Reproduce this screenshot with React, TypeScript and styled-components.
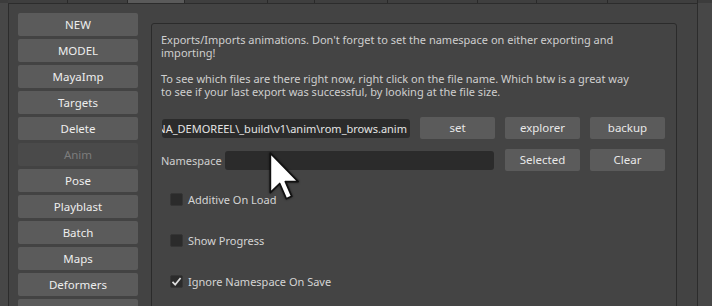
import React from "react";
import styled, { createGlobalStyle } from "styled-components";

const GlobalStyle = createGlobalStyle`
  html, body {
    margin: 0;
    padding: 0;
    background: #444444;
  }
  body {
    font-family: "Noto Sans", "Open Sans", sans-serif;
    color: #d8d8d8;
  }
`;

const tabs = [60, 60, 57, 83, 47, 73, 90, 59, 71, 90];
const sideItems = [
  "NEW",
  "MODEL",
  "MayaImp",
  "Targets",
  "Delete",
  "Anim",
  "Pose",
  "Playblast",
  "Batch",
  "Maps",
  "Deformers",
  "",
];

const App = () => {
  return (
    <Screen>
      <GlobalStyle />
      {/* tab strip, only the bottom edge is visible */}
      <TabStrip>
        {tabs.map((w, i) => (
          <Tab key={i} $width={w} $active={i === 2} />
        ))}
      </TabStrip>

      <Frame>
        {/* side menu */}
        <Sidebar>
          {sideItems.map((name, i) => (
            <SideButton key={i} $disabled={name === "Anim"}>
              {name}
            </SideButton>
          ))}
        </Sidebar>

        {/* anim panel */}
        <Panel>
          <Info>
            Exports/Imports animations. Don't forget to set the namespace on
            either exporting and importing!
            <br />
            <br />
            To see which files are there right now, right click on the file
            name. Which btw is a great way to see if your last export was
            successful, by looking at the file size.
          </Info>

          <Controls>
            <PathField>
              <span>NA_DEMOREEL\_build\v1\anim\rom_brows.anim</span>
            </PathField>
            <ToolButton>set</ToolButton>
            <ToolButton>explorer</ToolButton>
            <ToolButton>backup</ToolButton>

            <NamespaceRow>
              <Label>Namespace</Label>
              <TextInput />
            </NamespaceRow>
            <ToolButton>Selected</ToolButton>
            <ToolButton>Clear</ToolButton>
          </Controls>

          <Options>
            <CheckRow>
              <Box />
              <span>Additive On Load</span>
            </CheckRow>
            <CheckRow>
              <Box />
              <span>Show Progress</span>
            </CheckRow>
            <CheckRow>
              <Box>
                <svg width="11" height="11" viewBox="0 0 11 11">
                  <path
                    d="M1.5 5.8 L4.2 8.6 L9.6 2"
                    fill="none"
                    stroke="#dcdcdc"
                    strokeWidth="1.7"
                  />
                </svg>
              </Box>
              <span>Ignore Namespace On Save</span>
            </CheckRow>
          </Options>
        </Panel>
      </Frame>

      <Cursor width="31" height="48" viewBox="0 0 12.5 19.5">
        <path
          d="M0.5 0.5 L0.5 16.5 L4.3 12.8 L7 19 L9.2 18 L6.6 12 L11.8 12 Z"
          fill="#ffffff"
          stroke="#111"
          strokeWidth="0.7"
          strokeLinejoin="round"
        />
      </Cursor>
    </Screen>
  );
};

const Screen = styled.div`
  position: relative;
  width: 712px;
  height: 306px;
  overflow: hidden;
  background: #474747;
`;

const TabStrip = styled.div`
  display: flex;
  height: 3px;
  padding-left: 8px;
  background: #3c3c3c;
`;

const Tab = styled.div<{ $width: number; $active?: boolean }>`
  width: ${(p) => p.$width}px;
  height: 3px;
  background: ${(p) => (p.$active ? "#5a5a5a" : "#3f3f3f")};
  border-right: 1px solid #2a2a2a;
  box-sizing: border-box;
`;

const Frame = styled.div`
  display: flex;
  align-items: flex-start;
  width: 690px;
  height: 310px;
  margin-left: 8px;
  box-sizing: border-box;
  border: 1px solid #2c2c2c;
  border-bottom: none;
  background: #434343;
  padding: 9px 0 0 9px;
`;

const Sidebar = styled.div`
  display: flex;
  flex-direction: column;
  gap: 3px;
  width: 120px;
  flex-shrink: 0;
`;

const SideButton = styled.div<{ $disabled?: boolean }>`
  height: 23px;
  line-height: 23px;
  text-align: center;
  font-size: 11.5px;
  border-radius: 2px;
  background: ${(p) => (p.$disabled ? "#4a4a4a" : "#5b5b5b")};
  color: ${(p) => (p.$disabled ? "#7c7c7c" : "#eeeeee")};
`;

const Panel = styled.div`
  margin: 10px 0 0 13px;
  width: 526px;
  height: 300px;
  box-sizing: border-box;
  border: 1px solid #2b2b2b;
  border-radius: 3px;
  background: #444444;
  padding: 9px 0 0 9px;
`;

const Info = styled.div`
  width: 470px;
  font-size: 11px;
  line-height: 13px;
  color: #cfcfcf;
`;

const Controls = styled.div`
  display: grid;
  grid-template-columns: 249px 75px 75px 75px;
  grid-auto-rows: 22px;
  column-gap: 10px;
  row-gap: 10px;
  margin-top: 19px;
  align-items: center;
`;

const PathField = styled.div`
  width: 248px;
  height: 19px;
  margin-left: 1px;
  box-sizing: border-box;
  background: #2b2b2b;
  border-radius: 3px;
  overflow: hidden;
  display: flex;
  justify-content: flex-end;
  align-items: center;
  padding-right: 3px;
  font-size: 11px;
  color: #e4e4e4;
  white-space: nowrap;
`;

const ToolButton = styled.div`
  height: 22px;
  line-height: 22px;
  text-align: center;
  font-size: 11.5px;
  color: #e8e8e8;
  background: #5b5b5b;
  border-radius: 2px;
`;

const NamespaceRow = styled.div`
  grid-column: 1 / 3;
  display: flex;
  align-items: center;
`;

const Label = styled.span`
  width: 64px;
  font-size: 11px;
  color: #cfcfcf;
`;

const TextInput = styled.div`
  flex: 1;
  height: 19px;
  margin-right: 1px;
  background: #2b2b2b;
  border-radius: 3px;
`;

const Options = styled.div`
  display: flex;
  flex-direction: column;
  gap: 28px;
  margin: 22px 0 0 9px;
`;

const CheckRow = styled.div`
  display: flex;
  align-items: center;
  gap: 5px;
  height: 13px;
  font-size: 11px;
  color: #d4d4d4;
`;

const Box = styled.div`
  width: 13px;
  height: 13px;
  box-sizing: border-box;
  background: #2b2b2b;
  border: 1px solid #353535;
  border-radius: 2px;
  display: flex;
  align-items: center;
  justify-content: center;
`;

const Cursor = styled.svg`
  position: absolute;
  left: 269px;
  top: 152px;
  filter: drop-shadow(0 0 1px rgba(0, 0, 0, 0.6));
`;

export default App;
